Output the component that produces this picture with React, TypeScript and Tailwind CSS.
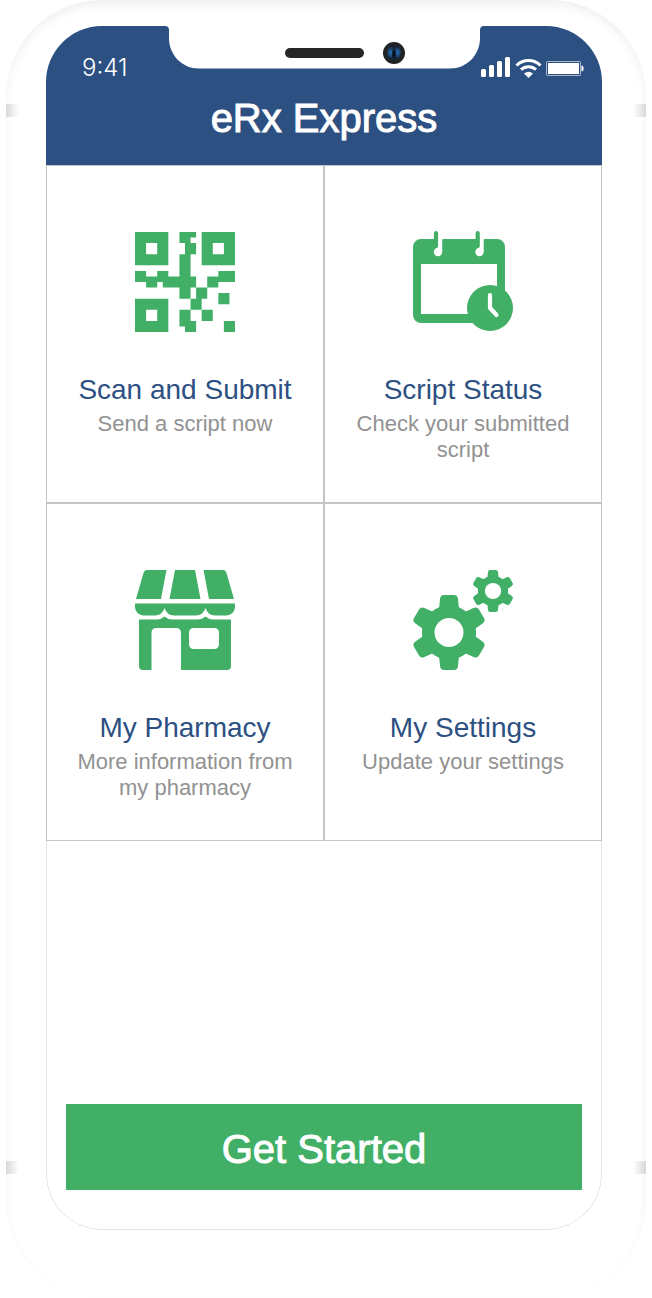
import type { ReactNode } from "react";

type Tile = {
  title: string;
  text: string;
  icon: ReactNode;
};

function QrIcon() {
  return (
    <svg viewBox="0 0 18 18" className="size-[100px]" fill="currentColor" aria-hidden="true">
      <path fillRule="evenodd" d="M0 0h6v6H0zM2 2v2h2V2zM12 0h6v6h-6zM14 2v2h2V2zM0 12h6v6H0zM2 14v2h2v-2z" />
      <path d="M8 0h3v1h-1v1h1v2h-1v4h1v2h-1v2H8v-2H5V9H4v1H2V9H0V7h2v1h2V7h2v1h2V4h1V2H8z" />
      <path d="M15 7h3v2h-3zM13 8h2v2h-2zM11 10h2v2h-2zM10 12h2v2h-2zM15 11h2v2h-2zM12 14h2v2h-2zM16 16h2v2h-2zM8 14h2v2h1v2H9v-1H8z" />
    </svg>
  );
}

function CalendarIcon() {
  return (
    <svg viewBox="0 0 100 100" className="size-[100px] overflow-visible" fill="none" aria-hidden="true">
      <path
        fill="currentColor"
        fillRule="evenodd"
        d="M8 7h76a8 8 0 0 1 8 8v68a8 8 0 0 1-8 8H8a8 8 0 0 1-8-8V15a8 8 0 0 1 8-8zM8 32v50h76V32z"
      />
      <path d="M24 6h7q-1.800.5-1.800 3v11h-5.200zM65.500 6h7q-1.800.5-1.800 3v11h-5.200z" fill="white" />
      <circle cx="25" cy="20" r="4.200" fill="white" />
      <circle cx="66.500" cy="20" r="4.200" fill="white" />
      <path d="M23 1v13M64.700 1v13" stroke="currentColor" strokeWidth="4.200" strokeLinecap="round" />
      <circle cx="77" cy="76" r="23" fill="currentColor" />
      <path d="M77 63v13l6.500 7" stroke="white" strokeWidth="4.200" strokeLinecap="round" strokeLinejoin="round" />
    </svg>
  );
}

function StoreIcon() {
  return (
    <svg viewBox="0 0 100 100" className="size-[100px]" fill="currentColor" aria-hidden="true">
      <path d="M12 0h19.500L26 29H1L8.500 3Q9.500 0 12 0zM40 0h20l5.500 29h-31zM68.500 0H88q2.500 0 3.500 3L99 29H74z" />
      <path d="M0 33.500h100V37a8.500 8.500 0 0 1-8.500 8.500H80Q73 45.500 70.500 38 68 45.500 61 45.500H39Q32 45.500 29.500 38 27 45.500 20 45.500H8.500A8.500 8.500 0 0 1 0 37z" />
      <path
        fillRule="evenodd"
        d="M4 49.500h18q4 0 7.500-3 3.500 3 7.500 3h26q4 0 7.500-3 3.500 3 7.500 3h18V96a4 4 0 0 1-4 4H46V63q0-5-5-5H21.500q-5 0-5 5v37H8a4 4 0 0 1-4-4zM59 58q-5 0-5 5v11q0 5 5 5h20q5 0 5-5V63q0-5-5-5z"
      />
    </svg>
  );
}

const teeth = [0, 60, 120, 180, 240, 300];

function Gear() {
  return (
    <>
      <circle r="27" fill="currentColor" />
      {teeth.map((angle) => (
        <path
          key={angle}
          d="M-14-22.500-9.800-25-9-33.500Q-8.600-37.500-5-37.500H5Q8.600-37.500 9-33.500L9.800-25 14-22.500z"
          fill="currentColor"
          transform={`rotate(${angle})`}
        />
      ))}
      <circle r="14.500" fill="white" />
    </>
  );
}

function GearsIcon() {
  return (
    <svg viewBox="0 0 100 100" className="size-[100px]" aria-hidden="true">
      <g transform="translate(36 62.500)">
        <Gear />
      </g>
      <g transform="translate(80 21) scale(.56)">
        <Gear />
      </g>
    </svg>
  );
}

const tiles: Tile[] = [
  { title: "Scan and Submit", text: "Send a script now", icon: <QrIcon /> },
  { title: "Script Status", text: "Check your submitted script", icon: <CalendarIcon /> },
  { title: "My Pharmacy", text: "More information from my pharmacy", icon: <StoreIcon /> },
  { title: "My Settings", text: "Update your settings", icon: <GearsIcon /> },
];

function Notch() {
  return (
    <div className="absolute inset-x-0 top-0 flex justify-center" aria-hidden="true">
      <svg width="326" height="43" viewBox="0 0 326 43" fill="none">
        <defs>
          <radialGradient id="glint">
            <stop offset="0" stopColor="#2a72bd" />
            <stop offset="1" stopColor="#2a72bd" stopOpacity="0" />
          </radialGradient>
        </defs>
        <path d="M0 0h4q4 0 4 4v8c0 17 13 30.500 30 30.500h251c17 0 30-13.500 30-30.500V4q0-4 4-4h3v-2H0z" fill="white" />
        <rect x="124" y="22" width="79" height="10" rx="5" fill="#262626" />
        <circle cx="233" cy="27" r="11" fill="#212224" />
        <circle cx="233" cy="27" r="7" fill="#14293f" />
        <ellipse cx="229.500" cy="26.500" rx="4" ry="6" fill="url(#glint)" />
        <ellipse cx="236.500" cy="26.500" rx="4" ry="6" fill="url(#glint)" />
        <ellipse cx="233" cy="28" rx="1.800" ry="4" fill="#0b1420" />
      </svg>
    </div>
  );
}

function StatusIcons() {
  return (
    <svg width="103" height="22" viewBox="0 0 103 22" fill="white" aria-hidden="true">
      <rect x="0" y="12" width="5" height="8" rx="1.500" />
      <rect x="8" y="8" width="5" height="12" rx="1.500" />
      <rect x="16" y="4" width="5" height="16" rx="1.500" />
      <rect x="24" y="0" width="5" height="20" rx="1.500" />
      <g fill="none" stroke="white" strokeWidth="3">
        <path d="M35.500 8.500a17 17 0 0 1 24 0" />
        <path d="M40 12.700a11 11 0 0 1 15 0" />
      </g>
      <path d="M43 16.500q4.500-3.500 9 0L47.500 21z" />
      <rect x="65.500" y="4.500" width="34" height="14" rx="1" fill="none" stroke="white" strokeOpacity=".6" />
      <rect x="67" y="6" width="31" height="11" />
      <path d="M100.500 8.500q2 0 2 2v2q0 2-2 2z" />
    </svg>
  );
}

function SideButtons({ className }: { className: string }) {
  return (
    <div className={`absolute inset-y-0 flex w-[13px] flex-col justify-between pt-[104px] pb-[124px] ${className}`}>
      <span className="h-[13px] from-[#d9d9d9] to-transparent bg-linear-(--side)" />
      <span className="h-[13px] from-[#d9d9d9] to-transparent bg-linear-(--side)" />
    </div>
  );
}

export default function App() {
  return (
    <div className="flex min-h-screen bg-white px-1.5 font-['Liberation_Sans',Arial,sans-serif]">
      <div className="relative flex flex-1 flex-col rounded-[96px] bg-white pt-[26px] pr-11 pb-[68px] pl-10 shadow-[inset_0_5px_10px_rgba(0,0,0,0.06)]">
        <SideButtons className="left-0 [--side:to_right]" />
        <SideButtons className="right-0 [--side:to_left]" />

        <div className="relative flex flex-1 flex-col overflow-hidden rounded-[56px] bg-white">
          <header className="relative bg-[#2d5082] pt-[29px] pb-[22px] text-white">
            <Notch />
            <div className="flex h-[26px] items-center justify-between pr-[18px] pl-9">
              <span className="font-['Inter',sans-serif] text-2xl font-light">9:41</span>
              <StatusIcons />
            </div>
            <h1 className="mt-3 text-center text-[40px] leading-[50px] [-webkit-text-stroke:1px_white]">eRx Express</h1>
          </header>

          <main className="flex flex-1 flex-col rounded-b-[56px] border-x border-b border-[#e3e3e3]">
            <div className="-mx-px grid grid-cols-2">
              {tiles.map((tile) => (
                <a
                  key={tile.title}
                  href="#"
                  className="flex h-[338px] flex-col items-center border border-[#c4c4c4] px-5 pt-[66px] text-center"
                >
                  <span className="text-[#41af66]">{tile.icon}</span>
                  <h2 className="mt-[42px] text-[28px] leading-8 text-[#2d5082]">{tile.title}</h2>
                  <p className="mt-[5px] text-[22px] leading-[26px] text-[#929292]">{tile.text}</p>
                </a>
              ))}
            </div>

            <button
              type="button"
              className="mx-[19px] mt-auto mb-[39px] h-[86px] bg-[#41af66] pt-1 text-[40px] text-white [-webkit-text-stroke:1px_white]"
            >
              Get Started
            </button>
          </main>
        </div>
      </div>
    </div>
  );
}
